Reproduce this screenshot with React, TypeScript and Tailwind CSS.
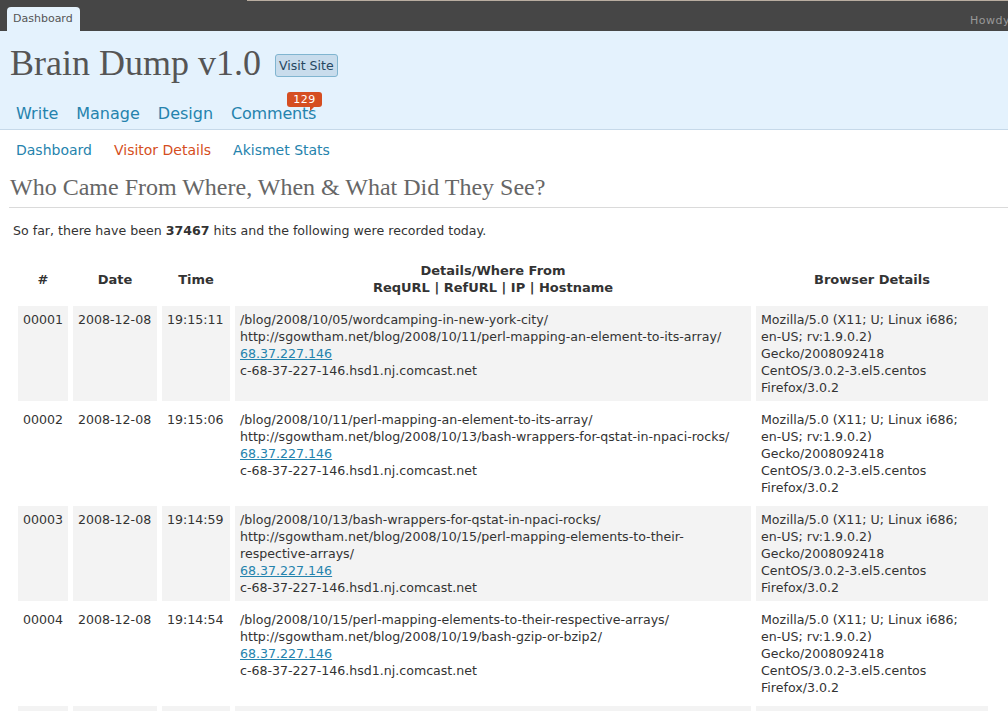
import React from "react"

const sans = "font-['DejaVu_Sans',Verdana,sans-serif]"
const serif = "font-['Liberation_Serif','Times_New_Roman',serif]"

type Hit = {
    id: string
    time: string
    req: string
    ref: string[]
}

const hits: Hit[] = [
    {
        id: "00001",
        time: "19:15:11",
        req: "/blog/2008/10/05/wordcamping-in-new-york-city/",
        ref: ["http://sgowtham.net/blog/2008/10/11/perl-mapping-an-element-to-its-array/"],
    },
    {
        id: "00002",
        time: "19:15:06",
        req: "/blog/2008/10/11/perl-mapping-an-element-to-its-array/",
        ref: ["http://sgowtham.net/blog/2008/10/13/bash-wrappers-for-qstat-in-npaci-rocks/"],
    },
    {
        id: "00003",
        time: "19:14:59",
        req: "/blog/2008/10/13/bash-wrappers-for-qstat-in-npaci-rocks/",
        ref: [
            "http://sgowtham.net/blog/2008/10/15/perl-mapping-elements-to-their-",
            "respective-arrays/",
        ],
    },
    {
        id: "00004",
        time: "19:14:54",
        req: "/blog/2008/10/15/perl-mapping-elements-to-their-respective-arrays/",
        ref: ["http://sgowtham.net/blog/2008/10/19/bash-gzip-or-bzip2/"],
    },
    {
        id: "00005",
        time: "19:14:50",
        req: "/blog/2008/10/19/bash-gzip-or-bzip2/",
        ref: ["http://sgowtham.net/blog/2008/11/02/wordpress-visitor-details/"],
    },
]

const browser = [
    "Mozilla/5.0 (X11; U; Linux i686;",
    "en-US; rv:1.9.0.2)",
    "Gecko/2008092418",
    "CentOS/3.0.2-3.el5.centos",
    "Firefox/3.0.2",
]

export default function App() {
    return (
        <div className={`${sans} min-h-[711px] bg-white text-[#333]`}>
            {/* top bar */}
            <div className="h-[31px] bg-[#464646] flex flex-col">
                <div className="h-px flex">
                    <div className="w-[247px]" />
                    <div className="flex-1 bg-[#b9ada0]" />
                </div>
                <div className="flex-1 flex items-end justify-between pl-[7px]">
                    <div className="h-[24px] w-[73px] bg-[#e4f2fd] rounded-t-[4px] text-[11px] text-[#555] pl-[6px] pt-[5px] leading-[14px]">
                        Dashboard
                    </div>
                    <div className="self-start mt-[13px] text-[11px] text-[#999] tracking-[0.5px] leading-[14px] whitespace-nowrap w-[38px] overflow-hidden">
                        Howdy,
                    </div>
                </div>
            </div>

            {/* header */}
            <div className="h-[99px] bg-[#e4f2fd] border-b border-[#c6d9e9] px-[10px]">
                <div className="flex items-center pt-[14px] h-[50px]">
                    <h1 className={`${serif} text-[36px] leading-[36px] text-[#555]`}>Brain Dump v1.0</h1>
                    <button className="ml-[14px] mt-[5px] h-[23px] px-[3px] bg-[#c8dcec] border border-[#80b5d0] rounded-[3px] text-[12.5px] text-[#264761] leading-[18px]">
                        Visit Site
                    </button>
                </div>
                <div className="flex gap-[18px] pl-[6px] mt-[23px] text-[16px] leading-[20px] text-[#2583ad]">
                    <span>Write</span>
                    <span>Manage</span>
                    <span>Design</span>
                    <span className="relative tracking-[-0.2px]">
                        Comments
                        <span className="absolute left-[56px] top-[-12px] h-[15px] w-[35px] bg-[#d54e21] rounded-[3px] text-white text-[11px] leading-[15px] text-center tracking-[0.5px]">
                            129
                            <span className="absolute left-[23px] bottom-[-4px] w-0 h-0 border-t-[4px] border-t-[#d54e21] border-r-[4px] border-r-transparent" />
                        </span>
                    </span>
                </div>
            </div>

            {/* content */}
            <div className="pl-[9px]">
                <div className="flex gap-[22px] pl-[7px] mt-[10px] text-[14px] leading-[20px] text-[#2583ad]">
                    <span>Dashboard</span>
                    <span className="text-[#d54e21]">Visitor Details</span>
                    <span>Akismet Stats</span>
                </div>

                <h2 className={`${serif} mt-[12px] pb-[5px] text-[24px] leading-[30px] text-[#666] border-b border-[#dadada] pl-px`}>
                    Who Came From Where, When &amp; What Did They See?
                </h2>

                <p className="mt-[14px] pl-[4px] text-[12.6px] leading-[17px]">
                    So far, there have been <b>37467</b> hits and the following were recorded today.
                </p>

                <table className="mt-[13px] ml-[4px] w-[980px] table-fixed border-separate border-spacing-[5px] text-[12.6px] leading-[17px]">
                    <thead>
                        <tr className="font-bold text-[13px]">
                            <th className="w-[50px] p-[5px] align-middle">#</th>
                            <th className="w-[84px] p-[5px] align-middle">Date</th>
                            <th className="w-[68px] p-[5px] align-middle">Time</th>
                            <th className="w-[516px] p-[5px] align-middle">
                                Details/Where From
                                <br />
                                ReqURL | RefURL | IP | Hostname
                            </th>
                            <th className="w-[232px] p-[5px] align-middle">Browser Details</th>
                        </tr>
                    </thead>
                    <tbody>
                        {hits.map((h, i) => {
                            const bg = i % 2 === 0 ? "bg-[#f3f3f3]" : "bg-white"
                            return (
                                <tr key={h.id} className="align-top">
                                    <td className={`${bg} p-[5px]`}>{h.id}</td>
                                    <td className={`${bg} p-[5px] whitespace-nowrap`}>2008-12-08</td>
                                    <td className={`${bg} p-[5px]`}>{h.time}</td>
                                    <td className={`${bg} p-[5px] whitespace-nowrap`}>
                                        <div>{h.req}</div>
                                        {h.ref.map((r) => (
                                            <div key={r}>{r}</div>
                                        ))}
                                        <div>
                                            <a className="text-[#2583ad] underline">68.37.227.146</a>
                                        </div>
                                        <div>c-68-37-227-146.hsd1.nj.comcast.net</div>
                                    </td>
                                    <td className={`${bg} p-[5px] whitespace-nowrap`}>
                                        {browser.map((b) => (
                                            <div key={b}>{b}</div>
                                        ))}
                                    </td>
                                </tr>
                            )
                        })}
                    </tbody>
                </table>
            </div>
        </div>
    )
}
